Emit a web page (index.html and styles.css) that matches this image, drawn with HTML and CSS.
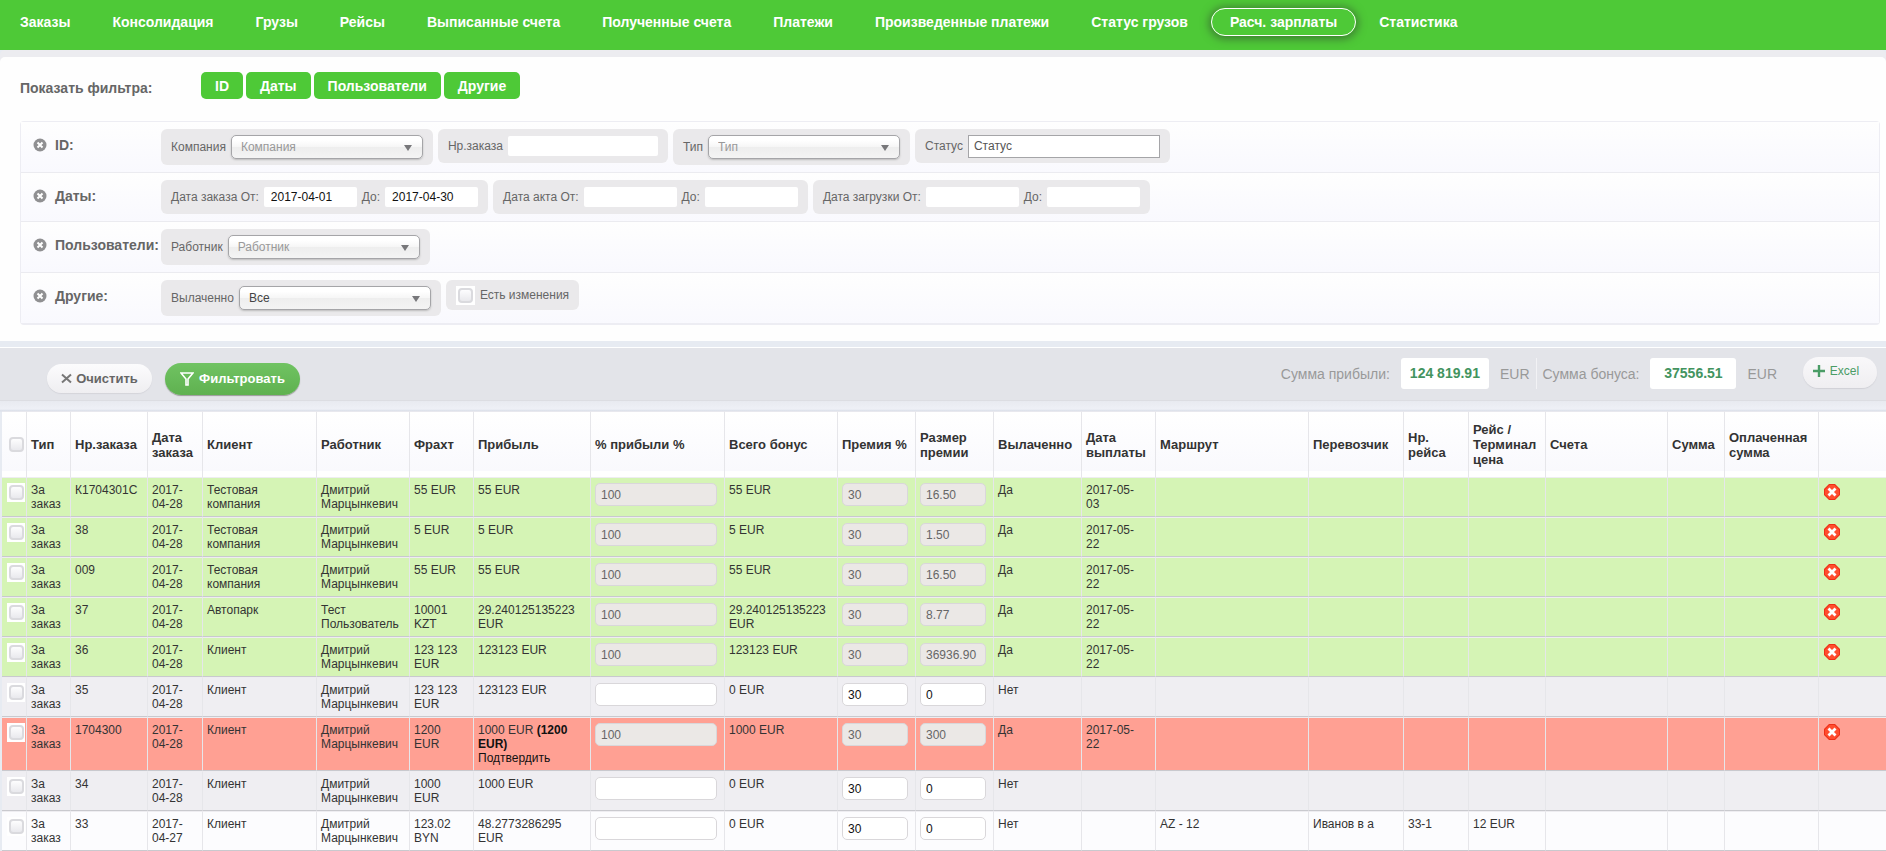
FILE: index.html
```html
<!DOCTYPE html>
<html lang="ru">
<head>
<meta charset="utf-8">
<title>Расч. зарплаты</title>
<link rel="stylesheet" href="styles.css">
</head>
<body>
<svg class="sprite" aria-hidden="true">
  <symbol id="close" viewBox="0 0 14 14"><circle cx="7" cy="7" r="6.500" fill="#909092"/><path d="M4.500 4.500l5 5M9.500 4.500l-5 5" stroke="#fff" stroke-width="2"/></symbol>
  <symbol id="del" viewBox="0 0 16 16"><path d="M5 0h6l5 5v6l-5 5H5l-5-5V5z" fill="#ee2f17"/><path d="M5.500 1h5L15 5.500v5L10.500 15h-5L1 10.500v-5z" fill="#ff4d2e"/><path d="M4.500 4.500l7 7M11.500 4.500l-7 7" stroke="#fff" stroke-width="2.800"/></symbol>
</svg>
<nav class="nav">
  <a href="#">Заказы</a>
  <a href="#">Консолидация</a>
  <a href="#">Грузы</a>
  <a href="#">Рейсы</a>
  <a href="#">Выписанные счета</a>
  <a href="#">Полученные счета</a>
  <a href="#">Платежи</a>
  <a href="#">Произведенные платежи</a>
  <a href="#">Статус грузов</a>
  <a href="#" class="active">Расч. зарплаты</a>
  <a href="#">Статистика</a>
</nav>
<section class="panel">
  <div class="toggles">
    <span class="toggles-label">Показать фильтра:</span>
    <button type="button">ID</button>
    <button type="button">Даты</button>
    <button type="button">Пользователи</button>
    <button type="button">Другие</button>
  </div>
  <div class="filters">
    <div class="frow">
      <div class="fname"><svg><use href="#close"/></svg><span>ID:</span></div>
      <div class="group tall"><label for="company">Компания</label><span class="sel empty"><select id="company"><option>Компания</option></select></span></div>
      <div class="group"><label for="order">Нр.заказа</label><input class="wide" type="text" id="order"></div>
      <div class="group tall"><label for="type">Тип</label><span class="sel empty"><select id="type"><option>Тип</option></select></span></div>
      <div class="group"><label for="status">Статус</label><input class="status" type="text" id="status" value="Статус"></div>
    </div>
    <div class="frow">
      <div class="fname"><svg><use href="#close"/></svg><span>Даты:</span></div>
      <div class="group"><label for="d1">Дата заказа От:</label><input type="text" id="d1" value="2017-04-01"><label for="d2">До:</label><input type="text" id="d2" value="2017-04-30"></div>
      <div class="group"><label for="d3">Дата акта От:</label><input type="text" id="d3"><label for="d4">До:</label><input type="text" id="d4"></div>
      <div class="group"><label for="d5">Дата загрузки От:</label><input type="text" id="d5"><label for="d6">До:</label><input type="text" id="d6"></div>
    </div>
    <div class="frow">
      <div class="fname"><svg><use href="#close"/></svg><span>Пользователи:</span></div>
      <div class="group tall"><label for="worker">Работник</label><span class="sel empty"><select id="worker"><option>Работник</option></select></span></div>
    </div>
    <div class="frow">
      <div class="fname"><svg><use href="#close"/></svg><span>Другие:</span></div>
      <div class="group tall"><label for="paid">Вылаченно</label><span class="sel"><select id="paid"><option>Все</option></select></span></div>
      <div class="group short"><span class="ck"><input type="checkbox" id="chg"></span><label for="chg">Есть изменения</label></div>
    </div>
  </div>
</section>
<section class="toolbar">
  <button type="button" class="clear"><svg width="11" height="11" viewBox="0 0 11 11"><path d="M1 1.500l9 8M10 1.500l-9 8" stroke="#777" stroke-width="2" fill="none"/></svg>Очистить</button>
  <button type="button" class="apply"><svg width="14" height="14" viewBox="0 0 14 14"><path d="M1 1h12L8 7v6H6V7z" stroke="#fff" stroke-width="1.600" fill="none"/></svg>Фильтровать</button>
  <div class="sum first"><span>Сумма прибыли:</span><output>124 819.91</output><span>EUR</span></div>
  <div class="sum"><span>Сумма бонуса:</span><output>37556.51</output><span>EUR</span></div>
  <button type="button" class="excel"><svg width="12" height="12" viewBox="0 0 12 12"><path d="M6 0v12M0 6h12" stroke="#4a9c66" stroke-width="2.400"/></svg>Excel</button>
</section>
<main class="grid">
<table>
<colgroup><col class="w25"><col class="w44"><col class="w77"><col class="w55"><col class="w114"><col class="w93"><col class="w64"><col class="w117"><col class="w134"><col class="w113"><col class="w78"><col class="w78"><col class="w88"><col class="w74"><col class="w153"><col class="w95"><col class="w65"><col class="w77"><col class="w122"><col class="w57"><col class="w94"><col></colgroup>
<thead><tr><th class="c"><span class="ck"><input type="checkbox" aria-label="Все"></span></th><th>Тип</th><th>Нр.заказа</th><th>Дата заказа</th><th>Клиент</th><th>Работник</th><th>Фрахт</th><th>Прибыль</th><th>% прибыли %</th><th>Всего бонус</th><th>Премия %</th><th>Размер премии</th><th>Вылаченно</th><th>Дата выплаты</th><th>Маршрут</th><th>Перевозчик</th><th>Нр. рейса</th><th>Рейс / Терминал цена</th><th>Счета</th><th>Сумма</th><th>Оплаченная сумма</th><th></th></tr></thead>
<tbody>
<tr class="green"><td class="c"><span class="ck"><input type="checkbox" aria-label="К1704301C"></span></td><td>За заказ</td><td>К1704301C</td><td>2017-04-28</td><td>Тестовая<br>компания</td><td>Дмитрий Марцынкевич</td><td>55 EUR</td><td>55 EUR</td><td><input type="text" aria-label="% прибыли" value="100" disabled></td><td>55 EUR</td><td><input type="text" aria-label="Премия %" value="30" disabled></td><td><input type="text" aria-label="Размер премии" value="16.50" disabled></td><td>Да</td><td>2017-05-<br>03</td><td></td><td></td><td></td><td></td><td></td><td></td><td></td><td><button type="button" class="del" aria-label="Удалить"><svg><use href="#del"/></svg></button></td></tr>
<tr class="green"><td class="c"><span class="ck"><input type="checkbox" aria-label="38"></span></td><td>За заказ</td><td>38</td><td>2017-04-28</td><td>Тестовая<br>компания</td><td>Дмитрий Марцынкевич</td><td>5 EUR</td><td>5 EUR</td><td><input type="text" aria-label="% прибыли" value="100" disabled></td><td>5 EUR</td><td><input type="text" aria-label="Премия %" value="30" disabled></td><td><input type="text" aria-label="Размер премии" value="1.50" disabled></td><td>Да</td><td>2017-05-<br>22</td><td></td><td></td><td></td><td></td><td></td><td></td><td></td><td><button type="button" class="del" aria-label="Удалить"><svg><use href="#del"/></svg></button></td></tr>
<tr class="green"><td class="c"><span class="ck"><input type="checkbox" aria-label="009"></span></td><td>За заказ</td><td>009</td><td>2017-04-28</td><td>Тестовая<br>компания</td><td>Дмитрий Марцынкевич</td><td>55 EUR</td><td>55 EUR</td><td><input type="text" aria-label="% прибыли" value="100" disabled></td><td>55 EUR</td><td><input type="text" aria-label="Премия %" value="30" disabled></td><td><input type="text" aria-label="Размер премии" value="16.50" disabled></td><td>Да</td><td>2017-05-<br>22</td><td></td><td></td><td></td><td></td><td></td><td></td><td></td><td><button type="button" class="del" aria-label="Удалить"><svg><use href="#del"/></svg></button></td></tr>
<tr class="green"><td class="c"><span class="ck"><input type="checkbox" aria-label="37"></span></td><td>За заказ</td><td>37</td><td>2017-04-28</td><td>Автопарк</td><td>Тест Пользователь</td><td>10001 KZT</td><td>29.240125135223 EUR</td><td><input type="text" aria-label="% прибыли" value="100" disabled></td><td>29.240125135223 EUR</td><td><input type="text" aria-label="Премия %" value="30" disabled></td><td><input type="text" aria-label="Размер премии" value="8.77" disabled></td><td>Да</td><td>2017-05-<br>22</td><td></td><td></td><td></td><td></td><td></td><td></td><td></td><td><button type="button" class="del" aria-label="Удалить"><svg><use href="#del"/></svg></button></td></tr>
<tr class="green"><td class="c"><span class="ck"><input type="checkbox" aria-label="36"></span></td><td>За заказ</td><td>36</td><td>2017-04-28</td><td>Клиент</td><td>Дмитрий Марцынкевич</td><td>123 123 EUR</td><td>123123 EUR</td><td><input type="text" aria-label="% прибыли" value="100" disabled></td><td>123123 EUR</td><td><input type="text" aria-label="Премия %" value="30" disabled></td><td><input type="text" aria-label="Размер премии" value="36936.90" disabled></td><td>Да</td><td>2017-05-<br>22</td><td></td><td></td><td></td><td></td><td></td><td></td><td></td><td><button type="button" class="del" aria-label="Удалить"><svg><use href="#del"/></svg></button></td></tr>
<tr class="grey"><td class="c"><span class="ck"><input type="checkbox" aria-label="35"></span></td><td>За заказ</td><td>35</td><td>2017-04-28</td><td>Клиент</td><td>Дмитрий Марцынкевич</td><td>123 123 EUR</td><td>123123 EUR</td><td><input type="text" aria-label="% прибыли"></td><td>0 EUR</td><td><input type="text" aria-label="Премия %" value="30"></td><td><input type="text" aria-label="Размер премии" value="0"></td><td>Нет</td><td></td><td></td><td></td><td></td><td></td><td></td><td></td><td></td><td></td></tr>
<tr class="red"><td class="c"><span class="ck"><input type="checkbox" aria-label="1704300"></span></td><td>За заказ</td><td>1704300</td><td>2017-04-28</td><td>Клиент</td><td>Дмитрий Марцынкевич</td><td>1200 EUR</td><td>1000 EUR <b>(1200</b> <b>EUR)</b><br><a href="#">Подтвердить</a></td><td><input type="text" aria-label="% прибыли" value="100" disabled></td><td>1000 EUR</td><td><input type="text" aria-label="Премия %" value="30" disabled></td><td><input type="text" aria-label="Размер премии" value="300" disabled></td><td>Да</td><td>2017-05-<br>22</td><td></td><td></td><td></td><td></td><td></td><td></td><td></td><td><button type="button" class="del" aria-label="Удалить"><svg><use href="#del"/></svg></button></td></tr>
<tr class="grey"><td class="c"><span class="ck"><input type="checkbox" aria-label="34"></span></td><td>За заказ</td><td>34</td><td>2017-04-28</td><td>Клиент</td><td>Дмитрий Марцынкевич</td><td>1000 EUR</td><td>1000 EUR</td><td><input type="text" aria-label="% прибыли"></td><td>0 EUR</td><td><input type="text" aria-label="Премия %" value="30"></td><td><input type="text" aria-label="Размер премии" value="0"></td><td>Нет</td><td></td><td></td><td></td><td></td><td></td><td></td><td></td><td></td><td></td></tr>
<tr><td class="c"><span class="ck"><input type="checkbox" aria-label="33"></span></td><td>За заказ</td><td>33</td><td>2017-04-27</td><td>Клиент</td><td>Дмитрий Марцынкевич</td><td>123.02 BYN</td><td>48.2773286295 EUR</td><td><input type="text" aria-label="% прибыли"></td><td>0 EUR</td><td><input type="text" aria-label="Премия %" value="30"></td><td><input type="text" aria-label="Размер премии" value="0"></td><td>Нет</td><td></td><td>AZ - 12</td><td>Иванов в а</td><td>33-1</td><td>12 EUR</td><td></td><td></td><td></td><td></td></tr>
</tbody>
</table>
</main>
</body>
</html>
```

FILE: styles.css
```css
* { box-sizing: border-box; }
body {
  margin: 0;
  background: #e7ebf2;
  color: #333;
  font: 12px/14px "Liberation Sans", Arial, sans-serif;
}
input, select, button, output { font: inherit; color: inherit; margin: 0; }
button { border: 0; padding: 0; background: none; white-space: nowrap; }
.sprite { display: none; }

.nav {
  display: flex;
  align-items: center;
  gap: 4px;
  height: 50px;
  padding: 0 0 6px 1px;
  background: #4ec937;
}
.nav a {
  padding: 0 18px;
  border: 1px solid transparent;
  border-radius: 14px;
  color: #fff;
  font-size: 14px;
  font-weight: bold;
  line-height: 26px;
  text-decoration: none;
  white-space: nowrap;
}
.nav .active { border-color: #fff; box-shadow: 0 1px 8px 2px #3d7d32; }

.panel {
  padding: 15px 6px 16px 20px;
  border-radius: 5px 5px 0 0;
  background: #fefefe;
  box-shadow: 0 -7px 0 #ececf0;
  margin-top: 7px;
}
.toggles { display: flex; align-items: center; gap: 3px; margin-bottom: 22px; }
.toggles-label {
  width: 178px;
  padding-top: 4px;
  color: #666;
  font-size: 14px;
  font-weight: bold;
}
.toggles button {
  height: 27px;
  padding: 0 14px;
  border-radius: 5px;
  background: #4ec937;
  color: #fff;
  font-size: 14px;
  font-weight: bold;
}
.filters { border: 1px solid #ededf3; border-width: 1px 1px 2px; border-radius: 4px; }
.frow {
  display: flex;
  align-items: flex-start;
  gap: 5px;
  padding: 7px 0;
  background: linear-gradient(#fefefe, #f9f9fe);
}
.frow + .frow { border-top: 1px solid #ebebf0; }
.fname {
  display: flex;
  align-items: center;
  gap: 8px;
  width: 135px;
  height: 32px;
  padding-left: 12px;
  color: #666;
  font-size: 14px;
  font-weight: bold;
}
.fname svg { flex: none; width: 14px; height: 14px; }
.group {
  display: flex;
  align-items: center;
  gap: 5px;
  height: 34px;
  padding: 0 10px;
  border-radius: 6px;
  background: #eae9eb;
  color: #666;
  white-space: nowrap;
}
.group.tall { height: 36px; }
.group.short { height: 30px; }
.group input[type="text"] {
  width: 93px;
  height: 20px;
  padding: 0 7px;
  border: 0;
  border-radius: 2px;
  background: #fff;
  color: #111;
}
.group input.wide { width: 150px; }
.group input.status {
  width: 192px;
  height: 23px;
  padding: 0 5px;
  border: 1px solid #a5a5a8;
  border-radius: 0;
  color: #555;
}
.sel { position: relative; }
.sel select {
  display: block;
  width: 192px;
  height: 24px;
  padding: 0 9px;
  border: 1px solid #a5a5a8;
  border-radius: 5px;
  background: linear-gradient(#fff 20%, #f6f6f6 50%, #eee 52%, #f4f4f4);
  box-shadow: 0 1px 2px #bbb;
  color: #444;
  appearance: none;
}
.sel.empty select { color: #999; }
.sel::after {
  content: "";
  position: absolute;
  top: 10px;
  right: 11px;
  border: 4px solid transparent;
  border-top: 6px solid #77777a;
  border-bottom: 0;
  pointer-events: none;
}
.ck { display: flex; justify-content: center; align-items: center; width: 19px; height: 19px; background: #fff; }
.ck input {
  width: 15px;
  height: 15px;
  border: 2px solid #dadade;
  border-radius: 4px;
  background: linear-gradient(#fdfdfe, #e9e9ed);
  appearance: none;
}

.toolbar {
  display: flex;
  align-items: flex-start;
  height: 54px;
  margin-top: 6px;
  padding: 9px 9px 0 47px;
  border-top: 1px solid #fff;
  border-bottom: 1px solid #dcdde2;
  background: #e3e4e9;
  color: #999;
  font-size: 14px;
}
.toolbar button { display: flex; align-items: center; justify-content: center; }
.toolbar .clear {
  gap: 4px;
  width: 105px;
  height: 29px;
  margin: 7px 13px 0 0;
  border-radius: 15px;
  background: linear-gradient(#fcfcfd, #efeef1);
  box-shadow: 0 1px 1px #d4d4da;
  color: #666;
  font-size: 13px;
  font-weight: bold;
}
.toolbar .apply {
  gap: 5px;
  width: 135px;
  height: 32px;
  margin-top: 6px;
  border-radius: 16px;
  background: linear-gradient(#70c362, #5fb150);
  box-shadow: 0 1px 1px #999;
  color: #fff;
  font-size: 13px;
  font-weight: bold;
}
.sum { display: flex; align-items: center; gap: 11px; height: 31px; margin-top: 1px; padding: 0 6px; white-space: nowrap; }
.sum.first { margin-left: auto; border-right: 1px solid #f2f2f5; }
.sum output {
  min-width: 86px;
  padding: 0 9px;
  border-radius: 3px;
  background: #fff;
  color: #43945f;
  font-weight: bold;
  line-height: 31px;
  text-align: center;
}
.toolbar .excel {
  gap: 5px;
  width: 74px;
  height: 31px;
  margin-left: 20px;
  padding: 0 8px 4px 0;
  border-radius: 16px;
  background: linear-gradient(#f9f8fa, #efeef1);
  box-shadow: 0 1px 1px #d0d0d6;
  color: #4a9c66;
  font-size: 12px;
}

.grid { padding: 10px 0 0 2px; background: linear-gradient(#e8eaf0, #eef0f6 8px, #d9dee8 10px, #e7ebf2 11px); }
table { width: 100%; table-layout: fixed; border-spacing: 0; background: #fcfcfe; }
th, td { border-right: 1px solid #e6e6ea; text-align: left; }
th:last-child, td:last-child { border-right: 0; }
th {
  height: 66px;
  padding: 0 4px;
  border-top: 1px solid #e8e8ee;
  background: linear-gradient(#fff, #f9f9fd 90%, #fff 91%);
  font-size: 13px;
  line-height: 15px;
}
td {
  padding: 5px 4px;
  border-top: 1px solid #eeedf1;
  border-bottom: 1px solid #c9c9ce;
  vertical-align: top;
}
.c { padding-left: 5px; padding-right: 0; }
th .ck { background: none; }
td .ck { width: 18px; }
.green td { background: #d5f4b5; }
.grey td { background: #efeef2; }
.red td { background: #ffa093; }
td a, td b { color: #111; text-decoration: none; }
td input[type="text"] {
  display: block;
  width: calc(100% - 3px);
  height: 23px;
  padding: 0 5px;
  border: 1px solid #d9d7da;
  border-radius: 5px;
  background: #fff;
  color: #111;
}
td input[type="text"]:disabled { background: #ebe8e6; color: #666; }
.del { display: block; margin: 1px 0 0 1px; }
.del svg { display: block; width: 16px; height: 16px; }

.w25 { width: 25px; } .w44 { width: 44px; } .w55 { width: 55px; } .w57 { width: 57px; }
.w64 { width: 64px; } .w65 { width: 65px; } .w74 { width: 74px; } .w77 { width: 77px; }
.w78 { width: 78px; } .w88 { width: 88px; } .w93 { width: 93px; } .w94 { width: 94px; }
.w95 { width: 95px; } .w113 { width: 113px; } .w114 { width: 114px; } .w117 { width: 117px; }
.w122 { width: 122px; } .w134 { width: 134px; } .w153 { width: 153px; }
```
